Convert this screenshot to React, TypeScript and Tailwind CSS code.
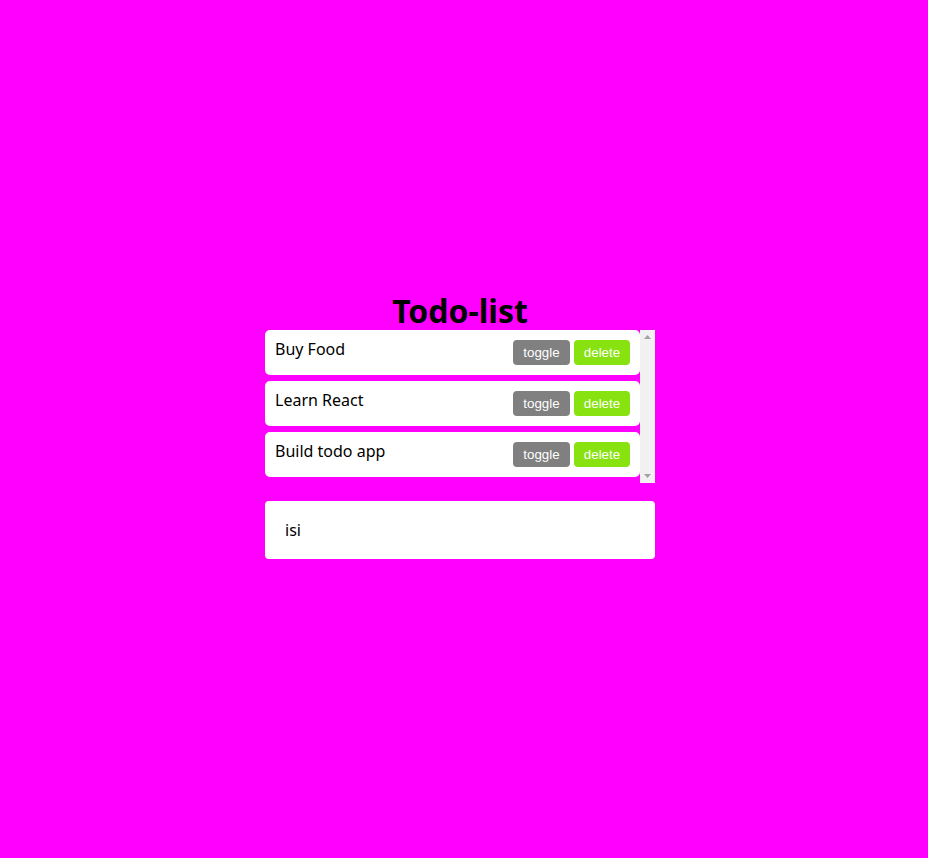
import { useState } from "react";

type Todo = { id: number; text: string; done: boolean };

const initialTodos: Todo[] = [
  { id: 1, text: "Buy Food", done: false },
  { id: 2, text: "Learn React", done: false },
  { id: 3, text: "Build todo app", done: false },
];

function ScrollTrack() {
  return (
    <div className="w-[15px] h-[153px] bg-[#f1f1f1] flex flex-col justify-between items-center py-[5px]">
      <svg width="7" height="4" viewBox="0 0 7 4">
        <path d="M0 4 L3.5 0 L7 4 Z" fill="#a3a3a3" />
      </svg>
      <svg width="7" height="4" viewBox="0 0 7 4">
        <path d="M0 0 L3.5 4 L7 0 Z" fill="#a3a3a3" />
      </svg>
    </div>
  );
}

export default function App() {
  const [todos, setTodos] = useState<Todo[]>(initialTodos);
  const [value, setValue] = useState("isi");

  const toggleTodo = (id: number) => {
    setTodos(todos.map((t) => (t.id === id ? { ...t, done: !t.done } : t)));
  };

  const deleteTodo = (id: number) => {
    setTodos(todos.filter((t) => t.id !== id));
  };

  return (
    <div
      className="min-h-screen bg-[#ff00ff] flex items-center justify-center"
      style={{ fontFamily: '"Noto Sans", "Open Sans", sans-serif' }}
    >
      <div className="w-[390px] mb-[8px] mr-[8px]">
        <h1 className="text-center text-[32px] font-bold leading-[38px] text-black">
          Todo-list
        </h1>
        <div className="flex">
          <div className="w-[375px] h-[153px] overflow-hidden">
            {todos.map((todo) => (
              <div
                key={todo.id}
                className="bg-white rounded-[5px] flex justify-between items-start pl-[10px] pr-[10px] pt-[8px] h-[45px] mb-[6px]"
              >
                <span
                  className={`text-[16px] leading-[22px] text-black ${
                    todo.done ? "line-through" : ""
                  }`}
                >
                  {todo.text}
                </span>
                <div className="flex gap-[4px] mt-[2px]">
                  <button
                    onClick={() => toggleTodo(todo.id)}
                    className="h-[25px] w-[57px] rounded-[4px] bg-[#808080] text-white text-[13.333px] pt-[1px]"
                    style={{ fontFamily: '"Liberation Sans", Arial, sans-serif' }}
                  >
                    toggle
                  </button>
                  <button
                    onClick={() => deleteTodo(todo.id)}
                    className="h-[25px] w-[56px] rounded-[4px] bg-[#88e20f] text-white text-[13.333px] pt-[1px]"
                    style={{ fontFamily: '"Liberation Sans", Arial, sans-serif' }}
                  >
                    delete
                  </button>
                </div>
              </div>
            ))}
          </div>
          <ScrollTrack />
        </div>
        <input
          value={value}
          onChange={(e) => setValue(e.target.value)}
          className="mt-[18px] w-full h-[58px] bg-white rounded-[4px] pl-[20px] text-[16px] text-black outline-none"
        />
      </div>
    </div>
  );
}
